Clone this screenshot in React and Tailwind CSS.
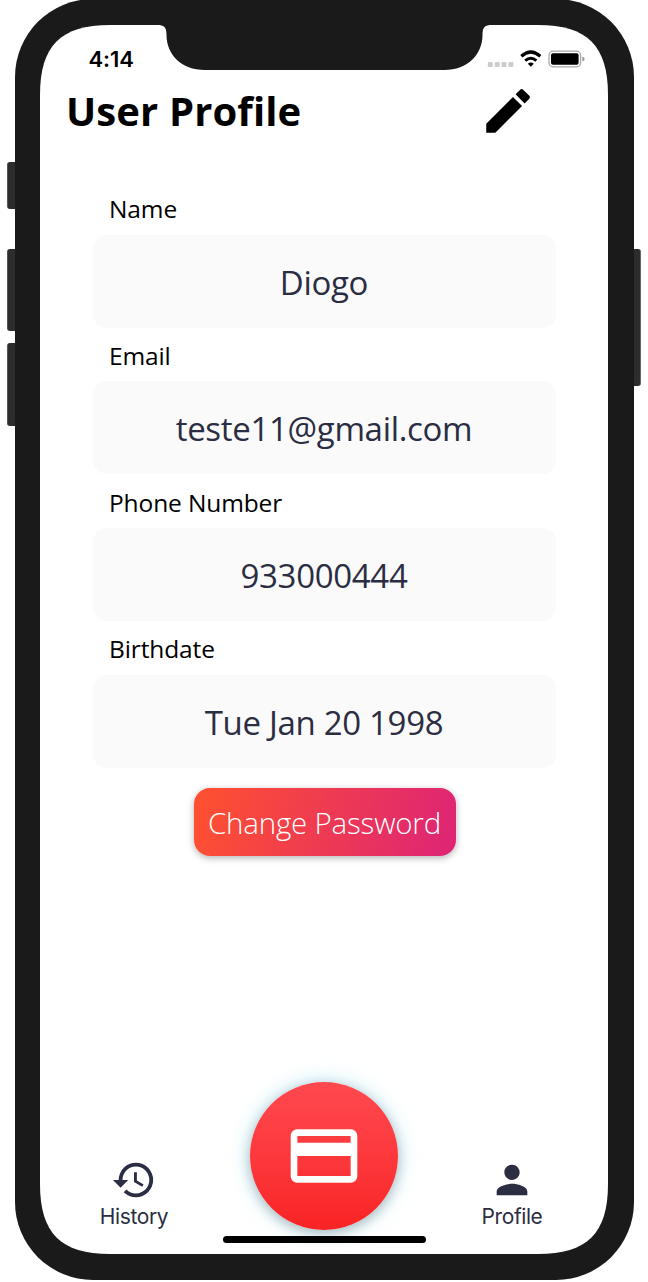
import { MdEdit, MdHistory, MdPerson, MdPayment } from "react-icons/md";

const fields = [
  { label: "Name", value: "Diogo" },
  { label: "Email", value: "teste11@gmail.com" },
  { label: "Phone Number", value: "933000444" },
  { label: "Birthdate", value: "Tue Jan 20 1998" },
];

function StatusBar() {
  return (
    <div className="flex h-[45px] items-start justify-between pl-[48.5px] pr-[23px]">
      <span className="pt-[20px] font-['Inter',sans-serif] text-[22px] leading-[28px] font-semibold tracking-[-0.1px] text-black">
        4:14
      </span>
      <svg className="mt-[23px]" width="98" height="22" viewBox="487 48 98 22" fill="none">
        <g fill="#cccccc">
          <rect x="487.8" y="62" width="5" height="5" rx="1.2" />
          <rect x="494.7" y="62" width="5" height="5" rx="1.2" />
          <rect x="501.5" y="62" width="5" height="5" rx="1.2" />
          <rect x="508.4" y="62" width="5" height="5" rx="1.2" />
        </g>
        <path d="M521.3 56.2Q530.8 47.8 540.3 56.2" stroke="#000" strokeWidth="3.2" />
        <path d="M525.2 60.6Q530.8 56 536.4 60.6" stroke="#000" strokeWidth="3" />
        <path d="M530.8 66.8L527.8 63.7Q530.8 61.3 533.8 63.7Z" fill="#000" />
        <rect x="549" y="51.2" width="31.6" height="15.6" rx="4" stroke="#a8a8a8" strokeWidth="1.3" />
        <rect x="551" y="53.2" width="27.6" height="11.6" rx="2" fill="#000" />
        <path d="M582.4 56.4Q584.6 57.2 584.6 59Q584.6 60.8 582.4 61.6Z" fill="#999" />
      </svg>
    </div>
  );
}

function Field({ label, value }) {
  return (
    <div className="h-[146.67px]">
      <div className="flex h-[53.33px] items-center pt-[3px] pl-[16.5px] text-[24.5px] tracking-[-0.12px] text-black">
        {label}
      </div>
      <div className="flex h-[93px] items-center justify-center rounded-[14px] bg-[#fafafa] pt-[2px] text-[33px] tracking-[-0.32px] text-[#2b2d42]">
        {value}
      </div>
    </div>
  );
}

function Tab({ icon: Icon, label }) {
  return (
    <div className="flex w-[80px] flex-col items-center text-[#2b2d42]">
      <Icon className="size-[46px]" />
      <span className="pt-px font-['Inter',sans-serif] text-[21px] leading-[26px] tracking-[-0.4px]">{label}</span>
    </div>
  );
}

export default function App() {
  return (
    <div className="flex h-[1282px] w-[648px] overflow-hidden bg-white font-['Open_Sans',sans-serif]">
      <div className="flex w-[14.5px] flex-col items-end pt-[162px]">
        <div className="h-[47px] w-[8px] rounded-l-[3px] border-l border-[#555] bg-[#2c2c2c]" />
        <div className="mt-[39.5px] h-[82.5px] w-[8px] rounded-l-[3px] border-l border-[#555] bg-[#2c2c2c]" />
        <div className="mt-[12px] h-[83px] w-[8px] rounded-l-[3px] border-l border-[#555] bg-[#2c2c2c]" />
      </div>

      <div className="relative -mt-px h-[1281px] w-[619px] shrink-0 rounded-[78px] bg-[#1a1a1a] px-[25.5px] pt-[26px]">
        <div className="flex h-[1229px] w-[568px] flex-col bg-white [clip-path:path('M0_70C0_20.7_20.7_0_70_0H498C547.3_0_568_20.7_568_70V1159C568_1208.3_547.3_1229_498_1229H70C20.7_1229_0_1208.3_0_1159Z')]">
          <StatusBar />

          <header className="flex h-[81px] items-center justify-between pr-[71px] pl-[26px]">
            <h1 className="pt-px text-[40px] leading-[56px] font-bold tracking-[0.12px] text-black">User Profile</h1>
            <MdEdit className="size-[58px] text-black" />
          </header>

          <main className="flex flex-col px-[52.5px] pt-[30.5px]">
            {fields.map((field) => (
              <Field key={field.label} label={field.label} value={field.value} />
            ))}
            <button className="mt-[20px] ml-[101px] flex h-[68px] w-[262px] items-center justify-center rounded-[16px] bg-[linear-gradient(105deg,#ff512f,#dd2476)] pt-[2px] text-[29.5px] font-light tracking-[-0.2px] text-white shadow-[0_2px_7px_rgba(0,0,0,0.3)]">
              Change Password
            </button>
          </main>

          <footer className="mt-auto flex h-[173px] flex-col">
            <nav className="flex h-[155px] items-start justify-between pr-[56px] pl-[54px]">
              <div className="pt-[76px]">
                <Tab icon={MdHistory} label="History" />
              </div>
              <div className="mt-[0.5px] ml-[2px] flex size-[148px] items-center justify-center rounded-full bg-linear-to-b from-[#ff484f] to-[#f92224] shadow-[0_0_20px_3px_rgba(130,215,235,0.35),0_3px_12px_rgba(0,0,0,0.3)]">
                <MdPayment className="size-[80px] text-white" />
              </div>
              <div className="pt-[76px]">
                <Tab icon={MdPerson} label="Profile" />
              </div>
            </nav>
            <div className="relative h-[7px] w-[203px] self-center rounded-full bg-black" />
          </footer>
        </div>

        <svg className="absolute top-[25px] left-[142px]" width="335" height="46" viewBox="0 0 335 46">
          <path
            d="M0 0V1C7 1 9.5 3 9.5 11C9.5 30 24 46 48 46H287C311 46 325.5 30 325.5 11C325.5 3 328 1 335 1V0Z"
            fill="#1a1a1a"
          />
        </svg>
      </div>

      <div className="pt-[248.5px]">
        <div className="h-[137px] w-[7.5px] rounded-r-[3px] border-r border-[#666] bg-[#2c2c2c]" />
      </div>
    </div>
  );
}
